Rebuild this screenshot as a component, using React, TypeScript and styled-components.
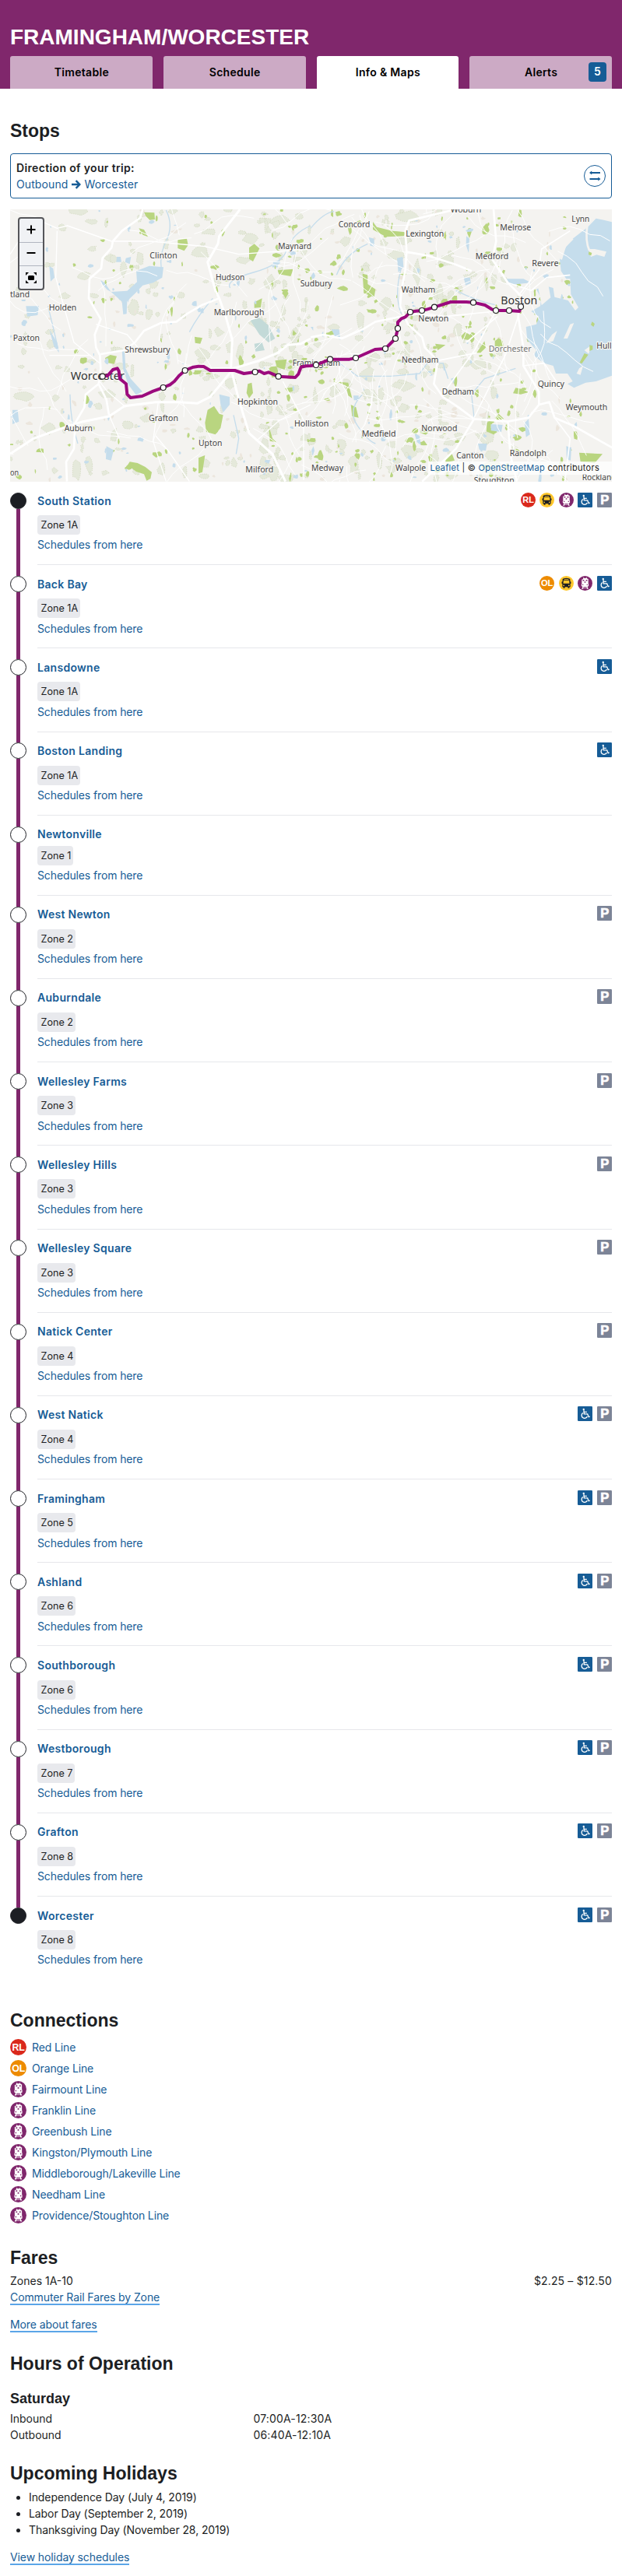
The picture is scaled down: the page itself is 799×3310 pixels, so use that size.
import React from "react";
import styled, { createGlobalStyle } from "styled-components";

const Global = createGlobalStyle`
  * { box-sizing: border-box; }
  body { margin: 0; background: #fff; color: #1c1e23; font: 14px/21px Inter, "Liberation Sans", sans-serif; }
  h1, h2, h3, p, ul { margin: 0; padding: 0; }
  a { color: #165c96; text-decoration: none; }
`;

const heading = `font-family: "Liberation Sans", Arial, sans-serif; font-weight: 700;`;

/* ---------- header ---------- */
const Header = styled.header`
  height: 114px;
  padding: 30px 13px 0;
  background: #80276c;
  display: flex;
  flex-direction: column;
  justify-content: space-between;
`;
const Title = styled.h1`${heading} color: #fff; font-size: 28px; line-height: 35px; white-space: nowrap;`;
const Tabs = styled.nav`display: grid; grid-template-columns: repeat(4, 1fr); gap: 14px;`;
const Tab = styled.a<{ $active?: boolean }>`
  position: relative;
  height: 42px;
  padding-left: 1px;
  border-radius: 3px 3px 0 0;
  background: ${(p) => (p.$active ? "#fff" : "#ccaac5")};
  color: #000;
  font-weight: 600;
  letter-spacing: 0.3px;
  line-height: 42px;
  text-align: center;
`;
const Badge = styled.span`
  position: absolute;
  top: 8px;
  right: 7px;
  width: 23px;
  height: 25px;
  border-radius: 4px;
  background: #165c96;
  color: #fff;
  line-height: 24px;
`;

/* ---------- layout ---------- */
const Main = styled.main`padding: 40px 13px 14px;`;
const H2 = styled.h2<{ $top?: number }>`
  ${heading} font-size: 23px; line-height: 28px; margin-top: ${(p) => p.$top || 0}px;
`;
const H3 = styled.h3`${heading} font-size: 18px; line-height: 21px; margin: 21.5px 0 4px;`;

const Direction = styled.div`
  display: flex;
  align-items: center;
  justify-content: space-between;
  height: 58px;
  margin: 15px 0 14px;
  padding: 0 7px;
  border: 1px solid #165c96;
  border-radius: 4px;
`;
const DirectionLabel = styled.div`font-weight: 600; letter-spacing: 0.35px;`;
const DirectionValue = styled.div`display: flex; align-items: center; gap: 4.5px; color: #165c96; letter-spacing: 0.1px;`;

/* ---------- map ---------- */
const MapFrame = styled.div`position: relative; height: 350px; overflow: hidden; background: #f4f3f0;`;
const MapSvg = styled.svg`display: block;`;
const ZoomControl = styled.div`
  position: absolute;
  left: 10px;
  top: 10px;
  width: 34px;
  border: 2px solid #55565a;
  border-radius: 4px;
  background: #f0f2f5;
  overflow: hidden;
`;
const ZoomButton = styled.div<{ $lift?: number }>`
  height: 30px;
  padding-bottom: ${(p) => p.$lift || 0}px;
  display: flex;
  align-items: center;
  justify-content: center;
  & + & { border-top: 1px solid #b0b5c0; }
`;
const Attribution = styled.div`
  position: absolute;
  right: 0;
  bottom: 9px;
  padding: 0 16px 0 2px;
  background: rgba(255, 255, 255, 0.7);
  font-size: 11px;
  letter-spacing: 0.28px;
  line-height: 17px;
  white-space: nowrap;
`;

/* ---------- stop list ---------- */
const Row = styled.div<{ $h: number }>`display: flex; height: ${(p) => p.$h}px;`;
const Rail = styled.div`width: 21px; margin-right: 14px; display: flex; flex-direction: column; align-items: center;`;
const Segment = styled.div<{ $hidden?: boolean; $grow?: boolean }>`
  width: 5px;
  margin-right: 1px;
  ${(p) => (p.$grow ? "flex: 1;" : "height: 13.9px;")}
  background: ${(p) => (p.$hidden ? "transparent" : "#80276c")};
`;
const Dot = styled.div<{ $filled: boolean }>`
  width: 21px;
  height: 21px;
  flex: none;
  border: 1px solid #1c1e23;
  border-radius: 50%;
  background: ${(p) => (p.$filled ? "#1c1e23" : "#fff")};
`;
const StopBody = styled.div<{ $last?: boolean }>`
  flex: 1;
  padding-top: 13.5px;
  border-bottom: 1px solid ${(p) => (p.$last ? "transparent" : "#e6e7eb")};
`;
const StopHead = styled.div<{ $gap: number }>`
  display: flex; justify-content: space-between; height: 21px; margin-bottom: ${(p) => p.$gap}px;
`;
const StopName = styled.a`font-weight: 600; letter-spacing: 0.3px;`;
const IconRow = styled.span`display: flex; gap: 5.6px;`;
const Zone = styled.div`
  width: fit-content;
  height: 25px;
  margin-bottom: 2.4px;
  padding: 0 3px 0 4.5px;
  border-radius: 4px;
  background: #e8e9ed;
  font-size: 12.6px;
  line-height: 25px;
`;
const ScheduleLink = styled.a`letter-spacing: -0.12px;`;

/* ---------- lower sections ---------- */
const ConnectionList = styled.div`display: grid; grid-auto-rows: 27px; align-items: center; margin-top: 7px;`;
const Connection = styled.a`display: flex; align-items: center; gap: 7px; letter-spacing: -0.13px;`;
const FareRow = styled.div`display: flex; justify-content: space-between; margin-top: 5px;`;
const Figure = styled.span`letter-spacing: 0.16px;`;
const HoursRow = styled.div`display: grid; grid-template-columns: 312.5px 1fr;`;
const LinkLine = styled.p<{ $top?: number }>`margin-top: ${(p) => p.$top || 0}px; letter-spacing: -0.1px;`;
const Underlined = styled.a`border-bottom: 2px solid #5ba5e8;`;
const Holidays = styled.ul`margin-top: 5.5px; padding-left: 24px; letter-spacing: -0.09px;`;

/* ---------- icons ---------- */
type IconName = "RL" | "OL" | "bus" | "rail" | "access" | "parking";

const IconSvg = styled.svg`flex: none;`;

const Icon = ({ name, size = 19 }: { name: IconName; size?: number }) => (
  <IconSvg width={size} height={size} viewBox="0 0 24 24">
    {(name === "RL" || name === "OL") && (
      <>
        <circle cx="12" cy="12" r="12" fill={name === "RL" ? "#da291c" : "#ed8b00"} />
        <text x="12.2" y="17" textAnchor="middle" textLength={name === "RL" ? 18.5 : 19.5} lengthAdjust="spacingAndGlyphs" fontFamily="Liberation Sans" fontWeight="700" fontSize="14.5" fill="#fff">
          {name}
        </text>
      </>
    )}
    {name === "bus" && (
      <>
        <circle cx="12" cy="12" r="12" fill="#ffc72c" />
        <path fill="#1c1e23" d="M7 4.500q5-2 10 0 1.200.4 1.200 1.800v3l1.300.3v3h-1v5.400h-1.500v2h-2.500v-2h-5v2H7v-2H5.500v-5.400h-1v-3l1.300-.3v-3Q5.800 4.900 7 4.500z" />
        <path fill="#ffc72c" d="M8.500 5.100h7v1h-7zM7.500 7.200h9l.6 5.200H6.900z" />
        <circle cx="7.800" cy="15.500" r="1.100" fill="#ffc72c" />
        <circle cx="16.200" cy="15.500" r="1.100" fill="#ffc72c" />
      </>
    )}
    {name === "rail" && (
      <>
        <circle cx="12" cy="12" r="12" fill="#80276c" />
        <path fill="#fff" d="M9 2.800h1.500v1h3v-1H15v1.200l2.300 1v7.500l.5.5v3.500l-2 1.300 1.700 3.400h-2.300l-.6-1.200H9.400l-.6 1.200H6.500l1.700-3.400-2-1.300V14l.5-.5V6L9 5z" />
        <path fill="#80276c" d="M8.300 6.300h2.300v1.800H8.300zM13.400 6.300h2.300v1.800h-2.300zM11 9h2v2.200h-2zM7.700 13.500h1.500V15H7.700zM14.800 13.500h1.500V15h-1.500zM9.500 18h5l.5 1.200H9z" />
      </>
    )}
    {name === "access" && (
      <>
        <rect width="24" height="24" rx="1.500" fill="#165c96" />
        <circle cx="9.800" cy="4.900" r="1.500" fill="#fff" />
        <path fill="none" stroke="#fff" strokeWidth="1.700" d="M10 6.500l.5 6h5.500l2 4.800 1.800-.7M10.300 9.300h4.700" />
        <path fill="none" stroke="#fff" strokeWidth="1.700" d="M8.500 10.800a4.700 4.700 0 1 0 7.100 5.500" />
      </>
    )}
    {name === "parking" && (
      <>
        <rect width="24" height="24" rx="1.500" fill="#7c8497" />
        <text x="12.300" y="19.500" textAnchor="middle" textLength="14" lengthAdjust="spacingAndGlyphs" fontFamily="Liberation Sans" fontWeight="700" fontSize="21.500" fill="#fff" stroke="#fff" strokeWidth=".8">P</text>
      </>
    )}
  </IconSvg>
);

const ArrowIcon = () => (
  <svg width="12" height="12" viewBox="0 0 12 12">
    <path d="M0 6h10M5.600 1.200L10.400 6l-4.800 4.800" fill="none" stroke="#165c96" strokeWidth="2.400" />
  </svg>
);

const SwapIcon = () => (
  <svg width="28" height="28" viewBox="0 0 28 28">
    <circle cx="14" cy="14" r="13.500" fill="#fff" stroke="#165c96" />
    <path d="M9 10h12M7.500 18h12" stroke="#165c96" strokeWidth="2" />
    <path d="M7 10l3.200-2.600v5.200zM21.500 18l-3.200-2.600v5.200z" fill="#165c96" />
  </svg>
);

/* ---------- map drawing: units are thirds of a pixel ---------- */
const EAST = 1197;

let seed = 7;
const rnd = () => {
  seed = (seed * 16807) % 2147483647;
  return seed / 2147483647;
};
const blob = (cx: number, cy: number, r: number) => {
  const n = 7 + Math.floor(rnd() * 4);
  const sx = 0.5 + rnd();
  const pts: string[] = [];
  for (let i = 0; i < n; i++) {
    const a = (i / n) * Math.PI * 2;
    const k = r * (0.55 + rnd() * 0.6);
    pts.push(`${(cx + Math.cos(a) * k * sx).toFixed(0)},${(cy + (Math.sin(a) * k) / sx).toFixed(0)}`);
  }
  return pts.join(" ");
};
const scatter = (count: number, min: number, max: number, x0: number, x1: number) =>
  Array.from({ length: count }, () => blob(x0 + rnd() * (x1 - x0), 30 + rnd() * 1040, min + rnd() * rnd() * (max - min)));

const olive = [...scatter(170, 8, 34, 40, 1200), ...scatter(220, 8, 36, 1000, 2000)];
const builtUp = [...scatter(50, 6, 16, 40, 1200), ...scatter(90, 6, 18, 1200, 2300)];
const green = [...scatter(85, 5, 22, 40, 1200), ...scatter(230, 5, 20, 1050, 2250)];
const ponds = [...scatter(85, 4, 17, 40, 1200), ...scatter(75, 4, 14, 1200, 2250)];
const lanes = Array.from({ length: 150 }, (_, i) => {
  let x = i < 45 ? rnd() * 1200 : 1100 + rnd() * 1050;
  let y = 30 + rnd() * 1040;
  let a = rnd() * 6.28;
  let d = `M${x.toFixed(0)} ${y.toFixed(0)}`;
  for (let k = 0; k < 6; k++) {
    a += (rnd() - 0.5) * 0.9;
    x += Math.cos(a) * 42;
    y += Math.sin(a) * 42;
    d += `L${x.toFixed(0)} ${y.toFixed(0)}`;
  }
  return d;
});

const westLabels: [string, number, number, number][] = [
  ["Clinton", 577, 215, 106], ["Maynard", 1072, 180, 128], ["Hudson", 831, 300, 112],
  ["Marlborough", 824, 434, 194], ["Holden", 188, 417, 107], ["Paxton", 50, 534, 103], ["tland", 39, 365, 75],
  ["Shrewsbury", 481, 578, 175], ["Grafton", 573, 843, 114], ["Auburn", 248, 881, 109], ["Hopkinton", 915, 779, 156],
  ["Upton", 765, 939, 91], ["Milford", 946, 1042, 108], ["on", 39, 1054, 33], ["Sudbury", 1157, 324, 123],
  ["Framingham", 1127, 630, 184], ["Holliston", 1134, 865, 133],
];
const eastLabels: [string, number, number, number][] = [
  ["Woburn", 539, 38, 119], ["Concord", 107, 95, 122], ["Lexington", 367, 132, 147], ["Melrose", 730, 107, 120],
  ["Lynn", 1006, 75, 69], ["Medford", 635, 220, 128], ["Revere", 853, 247, 103], ["Waltham", 350, 347, 131],
  ["Newton", 415, 458, 117], ["Needham", 351, 619, 142], ["Dedham", 506, 742, 124], ["Dorchester", 686, 577, 165],
  ["Hull", 1102, 563, 58], ["Quincy", 875, 710, 103], ["Weymouth", 983, 801, 161], ["Norwood", 427, 881, 138],
  ["Medfield", 197, 904, 132], ["Canton", 562, 986, 105], ["Randolph", 767, 977, 142], ["Medway", 3, 1036, 123],
  ["Walpole", 327, 1036, 117], ["Stoughton", 629, 1083, 156], ["Rockland", 1046, 1070, 132],
];
const westStops = [[395, 671], [629, 714], [713, 648], [983, 654], [1073, 671]];
const eastStops = [
  [21, 627], [75, 605], [174, 600], [288, 564], [327, 525], [336, 486], [384, 423], [429, 417], [477, 404],
  [627, 386], [714, 417], [765, 417], [810, 402],
];

const Label = ({ l, size = 33, color = "#444" }: { l: [string, number, number, number]; size?: number; color?: string }) => (
  <text x={l[1]} y={l[2]} textLength={l[3]} lengthAdjust="spacingAndGlyphs" fontSize={size} fill={color}>{l[0]}</text>
);

const RouteMap = () => (
  <MapSvg width="773" height="350" viewBox="39 27 2319 1050">
    <g fill="#e5e9db" stroke="#cdd5b8" strokeWidth="2" strokeDasharray="4 4">{olive.map((p, i) => <polygon key={i} points={p} />)}</g>
    <g fill="#ece6dd">{builtUp.map((p, i) => <polygon key={i} points={p} />)}</g>
    <g fill="#b9d580">
      {green.map((p, i) => <polygon key={i} points={p} />)}
      <path d="M555 38l40 2 2 26-20 2-15-15zM535 100l20 5 15 28-20-8zM685 145l35-5 5 25-15 22-25-10zM960 175l20-15 20 18-25 50-15-10zM1070 262l60-5 5-12-15 40-45-8zM980 385l30-15-5 35-25 2zM405 600l20-12 25 5-10 30-28-5zM750 518l30 5-8 22-20-3zM800 800l25-15 20 30 15 5-10 50-20 25-35-10-5-35zM955 700l15-5 5 40-15 20-10-20zM1060 610l45-5-8 40-30-10zM1035 860l15 50 15 15-25-5zM500 1000l30 5 30 15 25 20-5 25-15 8-10-25-30-10-20-15-18-3zM765 985l25-10-10 65-15 5z" />
      <g transform={`translate(${EAST})`}>
        <path d="M240 75l15 20 60 15 50 5-5 15-70 3-50-28zM200 275l20 5v35l30 20-5 30-40-15zM710 535l15-12 15 12 5 30-35-10zM580 515l15-15 22 12-2 20-30-5zM640 580l30-45 5 25-20 20zM790 715l25 5 25 12-30 8-30-4zM85 690l60 5 15 60-15-10-10-40zM155 780l20 10 10 40-25-5zM710 830l15-15 20 20-25 5zM680 850l15-15v35l25 15-15 10-28-12zM1035 965l90 5-30 35-55-5zM520 985l25-15 10 25-35 8zM480 545l40 5-30 20z" />
      </g>
    </g>
    <g fill="#c5ddec">
      {ponds.map((p, i) => <polygon key={i} points={p} />)}
      <path d="M525 265l50-20 55 5-5 40-35 20-40 10-30 32-30 28-2 50-13 2-5-49-42-38 62-4 38-34zM450 210l15 0 3 20-20 0zM485 215l20-5-5 28-18-8zM388 300l15 10 25 35-15-8-22-25zM190 245l15 10 5 35-15 15zM470 565l10 5 4 70 20 40 45 50-25 12-30-40-20-60zM100 400l50 0-5 35-40 5zM190 490l30 50 8 40-20-25zM48 800l20 0 5 45-25 10zM410 940l28 15-10 40-20-5zM845 740l40 10 0 30-25 30-10-30z" />
      <path fill="#c3dad8" d="M965 455l35-10 35 30 25 50-25 15-35-30zM980 545l30-5 10 30-35 5z" />
      <g transform={`translate(${EAST})`}>
        <path d="M333 215l22-5 3 40-20 20zM590 290l25 0 2 22-20 8zM600 130l12 10-3 55-10-30zM540 680l15-5-3 25zM695 855l45 3-5 27-40-5zM825 850l15-15 5 60-15 10zM645 930l35 0-5 28-25-5zM985 940l20 5-3 50-15-5zM400 890l20 10 5 35-15-10zM165 745l20 0 0 18-18 0zM0 480l10 0 0 15zM80 490l30 0 5 40-20-10zM750 295l70 0 30 15-80 8zM225 135l20 5 0 30-15-3z" />
        <path d="M1170 78L1130 68 1100 62 1068 95 1010 140 985 170 960 220 965 265 985 295 1000 295 1003 355 1032 405 1020 417 992 378 940 365 935 330 900 320 870 335 888 370 885 400 850 420 880 440 870 470 830 480 835 530 870 570 860 590 900 620 935 630 945 660 990 660 1010 690 990 700 1015 715 1060 695 1100 690 1170 665z" />
      </g>
    </g>
    <g transform={`translate(${EAST})`}>
      <path fill="#f4f3f0" d="M875 320l40-8 10 55-35 30zM1070 180l25 0 45 10-8 20-30-8-22 8zM1000 470l15-5-25 60-15 0zM930 510l20-15-15 40-28 8zM1035 640l15-10-10 35-15-5zM1055 570l25-18-8 32z" />
      <path fill="#b9d580" d="M1075 550l12 3 0 15-12 5zM1055 582l15 5-25 35-8-5zM1085 460l10 8-5 12-10-8zM1072 190l12 5-3 10-10-3z" />
      <path fill="none" stroke="#f4f3f0" strokeWidth="8" d="M1066 90q-8 60 8 95M1010 140l-30 30-15 50" />
    </g>
    <g fill="none" stroke="#c5ddec" strokeWidth="4">
      <path d="M640 30q30 60 0 120t-15 120M185 400q20 80 40 170M270 740q0 100 30 190M900 820l20 90-10 60M730 500q30-60 90-130M1197 90q-70 30-90 90t-130 90-90 60" />
      <path transform={`translate(${EAST})`} d="M0 100q50-60 90-65M100 280q30-80 120-120M350 430q-30-70 0-180M100 610l80 60 130 0 110-10 30-40 60 0 20 60M200 740q-60 60-20 120t70 70M630 830l-10-90 50-60 120-40M560 340q80 40 150 55" />
    </g>
    <g fill="none" stroke="#fff" strokeLinejoin="round">
      <g strokeWidth="3">{lanes.map((d, i) => <path key={i} d={d} />)}</g>
      <path strokeWidth="4" d="M39 200L130 60 220 100 260 90 430 150M220 110l-5 180 70 250 100 80M370 470l120 40 50 60M430 150l150 0 210 20 130 30 277-20M485 790l-70-60-40-50M190 590l160 0M420 820l40 90M600 900l50 60 80 116M610 770l-20 150 50 156M900 640l180-60M1197 780l-120 60-90 80M1090 690l80 150 0 230" />
      <path strokeWidth="8" d="M550 27L540 60 470 110 435 150 430 175 395 215 390 255 345 295 342 370 388 450 365 510 370 560 385 590 388 640 380 700 330 740 325 790 290 850 285 950 255 1000 258 1076M380 700l30 60 10 60M388 585l92-15 40-30 35-45 65-30 60-5 40-30 60-35 65-25" />
      <path strokeWidth="9" d="M925 27L845 130 840 160 800 230 830 340 845 370 870 440 895 530 890 640 920 760 960 890 1050 970 1100 1076M39 970L130 910 270 860 320 845 420 825 480 785 600 770 690 770 760 775 810 750 860 690 900 640 1000 610 1070 580 1110 550 1160 545 1197 525" />
      <g transform={`translate(${EAST})`}>
        <path strokeWidth="8" d="M0 520l50-10 70 15 80-35 50-30 100-20 60-10M560 27L380 70 365 110 370 190 365 260 350 340 345 400 375 470 430 520 440 560 490 610 475 700 510 750 570 790 630 835 760 845 840 830 880 780 920 770 940 830 1010 860 1170 950M630 835L560 950 430 1076M760 845l10 130 25 101M365 190l85 15 110 35 60 25M705 27l10 123-15 70 60 90 50 50-10 80 20 120 0 70 60 100 0 50" />
        <path strokeWidth="5" d="M760 310l90 30 60-50 90-10M800 360l80-100 10-80 110-70M714 417l-80 150-130 180M400 430l120 10 190-20M800 440l-50 150-120 240M600 540l120-100M490 610l150-30M820 630l80-10 60 90M940 830l60 80-20 166" />
      </g>
    </g>
    <g fontFamily='"Noto Sans", sans-serif' stroke="#f8f7f5" strokeWidth="7" strokeLinejoin="round" paintOrder="stroke">
      {westLabels.map((l) => <Label key={l[0]} l={l} />)}
      <Label l={["Worcester", 272, 683, 208]} size={42} color="#333" />
      <g transform={`translate(${EAST})`}>
        {eastLabels.map((l) => <Label key={l[0]} l={l} color={l[0] === "Dorchester" ? "#777" : "#444"} />)}
        <Label l={["Boston", 733, 394, 141]} size={43} color="#333" />
      </g>
    </g>
    <g fill="none" stroke="#9b0a7d" strokeWidth="12" strokeLinejoin="round">
      <path d="M395 671L415 668 435 645 452 640 458 650 462 680 486 700 490 740 503 753 548 747 590 728 629 714 655 703 672 690 690 668 713 648 745 635 765 632 785 633 810 648 905 648 940 660 983 654 1000 650 1018 660 1035 655 1073 671 1138 675 1150 662 1160 635 1180 631 1197 630 1218 627 1272 605 1347 605 1371 600 1445 567 1485 564 1524 525 1533 486 1533 462 1547 448 1562 442 1581 423 1602 419 1626 417 1647 412 1674 404 1737 384 1797 384 1824 386 1869 396 1897 413 1911 417 1962 417 2002 420 2007 402" />
    </g>
    <g fill="#fff" stroke="#222" strokeWidth="3.500">
      {westStops.map(([x, y]) => <circle key={x} cx={x} cy={y} r="10.500" />)}
      {eastStops.map(([x, y]) => <circle key={x} cx={x + EAST} cy={y} r="10.500" />)}
    </g>
  </MapSvg>
);

/* ---------- data ---------- */
const stops: { name: string; zone: string; icons: IconName[]; h?: number }[] = [
  { name: "South Station", zone: "1A", icons: ["RL", "bus", "rail", "access", "parking"] },
  { name: "Back Bay", zone: "1A", icons: ["OL", "bus", "rail", "access"] },
  { name: "Lansdowne", zone: "1A", icons: ["access"] },
  { name: "Boston Landing", zone: "1A", icons: ["access"] },
  { name: "Newtonville", zone: "1", icons: [], h: 103 },
  { name: "West Newton", zone: "2", icons: ["parking"] },
  { name: "Auburndale", zone: "2", icons: ["parking"] },
  { name: "Wellesley Farms", zone: "3", icons: ["parking"] },
  { name: "Wellesley Hills", zone: "3", icons: ["parking"] },
  { name: "Wellesley Square", zone: "3", icons: ["parking"] },
  { name: "Natick Center", zone: "4", icons: ["parking"] },
  { name: "West Natick", zone: "4", icons: ["access", "parking"] },
  { name: "Framingham", zone: "5", icons: ["access", "parking"] },
  { name: "Ashland", zone: "6", icons: ["access", "parking"] },
  { name: "Southborough", zone: "6", icons: ["access", "parking"] },
  { name: "Westborough", zone: "7", icons: ["access", "parking"] },
  { name: "Grafton", zone: "8", icons: ["access", "parking"] },
  { name: "Worcester", zone: "8", icons: ["access", "parking"], h: 102 },
];

const connections: [IconName, string][] = [
  ["RL", "Red Line"], ["OL", "Orange Line"], ["rail", "Fairmount Line"], ["rail", "Franklin Line"],
  ["rail", "Greenbush Line"], ["rail", "Kingston/Plymouth Line"], ["rail", "Middleborough/Lakeville Line"],
  ["rail", "Needham Line"], ["rail", "Providence/Stoughton Line"],
];

export default function App() {
  return (
    <>
      <Global />
      <Header>
        <Title>FRAMINGHAM/WORCESTER</Title>
        <Tabs>
          <Tab>Timetable</Tab>
          <Tab>Schedule</Tab>
          <Tab $active>Info &amp; Maps</Tab>
          <Tab>Alerts<Badge>5</Badge></Tab>
        </Tabs>
      </Header>
      <Main>
        <H2>Stops</H2>
        <Direction>
          <div>
            <DirectionLabel>Direction of your trip:</DirectionLabel>
            <DirectionValue>Outbound <ArrowIcon /> Worcester</DirectionValue>
          </div>
          <SwapIcon />
        </Direction>
        <MapFrame>
          <RouteMap />
          <ZoomControl>
            <ZoomButton $lift={3}><svg width="12" height="12"><path d="M.5 6h11M6 .5v11" stroke="#000" strokeWidth="2" /></svg></ZoomButton>
            <ZoomButton $lift={4}><svg width="12" height="12"><path d="M.5 6h11" stroke="#000" strokeWidth="2" /></svg></ZoomButton>
            <ZoomButton>
              <svg width="14" height="14">
                <rect x="3" y="4" width="8" height="6" rx="1.500" />
                <path d="M0 0h4L0 4zM14 0v4l-4-4zM0 14v-4l4 4zM14 14h-4l4-4z" />
              </svg>
            </ZoomButton>
          </ZoomControl>
          <Attribution><a>Leaflet</a> | © <a>OpenStreetMap</a> contributors</Attribution>
        </MapFrame>
        {stops.map((s, i) => {
          const last = i === stops.length - 1;
          return (
            <Row key={s.name} $h={s.h || 107.2}>
              <Rail>
                <Segment $hidden={i === 0} />
                <Dot $filled={i === 0 || last} />
                <Segment $grow $hidden={last} />
              </Rail>
              <StopBody $last={last}>
                <StopHead $gap={s.icons.length ? 8.6 : 4.3}>
                  <StopName>{s.name}</StopName>
                  <IconRow>{s.icons.map((n) => <Icon key={n} name={n} />)}</IconRow>
                </StopHead>
                <Zone>Zone {s.zone}</Zone>
                <ScheduleLink>Schedules from here</ScheduleLink>
              </StopBody>
            </Row>
          );
        })}
        <H2 $top={42.6}>Connections</H2>
        <ConnectionList>
          {connections.map(([n, t]) => <Connection key={t}><Icon name={n} size={21} />{t}</Connection>)}
        </ConnectionList>
        <H2 $top={27.2}>Fares</H2>
        <FareRow><span>Zones 1A-10</span><Figure>$2.25 – $12.50</Figure></FareRow>
        <LinkLine><Underlined>Commuter Rail Fares by Zone</Underlined></LinkLine>
        <LinkLine $top={14.5}><Underlined>More about fares</Underlined></LinkLine>
        <H2 $top={25.5}>Hours of Operation</H2>
        <H3>Saturday</H3>
        <HoursRow><span>Inbound</span><Figure>07:00A-12:30A</Figure></HoursRow>
        <HoursRow><span>Outbound</span><Figure>06:40A-12:10A</Figure></HoursRow>
        <H2 $top={25}>Upcoming Holidays</H2>
        <Holidays>
          <li>Independence Day (July 4, 2019)</li>
          <li>Labor Day (September 2, 2019)</li>
          <li>Thanksgiving Day (November 28, 2019)</li>
        </Holidays>
        <LinkLine $top={14}><Underlined>View holiday schedules</Underlined></LinkLine>
      </Main>
    </>
  );
}
